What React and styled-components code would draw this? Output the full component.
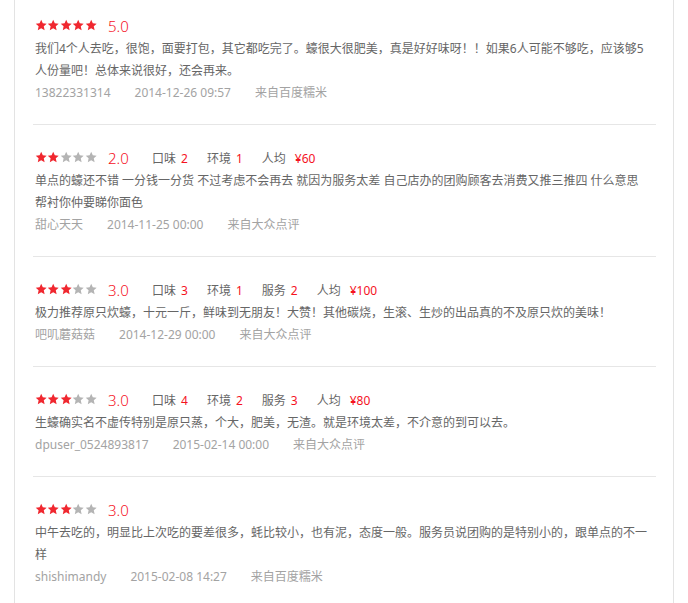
import styled, { createGlobalStyle } from "styled-components";

const GlobalStyle = createGlobalStyle`
  body {
    margin: 0;
    background: #fff;
    font-family: "Noto Sans", "Noto Sans CJK SC", sans-serif;
  }
`;

const reviews = [
  {
    stars: 5,
    rating: "5.0",
    scores: [],
    text: "我们4个人去吃，很饱，面要打包，其它都吃完了。蠔很大很肥美，真是好好味呀！！如果6人可能不够吃，应该够5人份量吧！总体来说很好，还会再来。",
    user: "13822331314",
    time: "2014-12-26 09:57",
    source: "来自百度糯米",
  },
  {
    stars: 2,
    rating: "2.0",
    scores: [
      ["口味", "2"],
      ["环境", "1"],
    ],
    price: "¥60",
    text: "单点的蠔还不错 一分钱一分货 不过考虑不会再去 就因为服务太差 自己店办的团购顾客去消费又推三推四 什么意思 帮衬你仲要睇你面色",
    user: "甜心天天",
    time: "2014-11-25 00:00",
    source: "来自大众点评",
  },
  {
    stars: 3,
    rating: "3.0",
    scores: [
      ["口味", "3"],
      ["环境", "1"],
      ["服务", "2"],
    ],
    price: "¥100",
    text: "极力推荐原只炊蠔，十元一斤，鲜味到无朋友！大赞！其他碳烧，生滚、生炒的出品真的不及原只炊的美味！",
    user: "吧叽蘑菇菇",
    time: "2014-12-29 00:00",
    source: "来自大众点评",
  },
  {
    stars: 3,
    rating: "3.0",
    scores: [
      ["口味", "4"],
      ["环境", "2"],
      ["服务", "3"],
    ],
    price: "¥80",
    text: "生蠔确实名不虚传特别是原只蒸，个大，肥美，无渣。就是环境太差，不介意的到可以去。",
    user: "dpuser_0524893817",
    time: "2015-02-14 00:00",
    source: "来自大众点评",
  },
  {
    stars: 3,
    rating: "3.0",
    scores: [],
    text: "中午去吃的，明显比上次吃的要差很多，蚝比较小，也有泥，态度一般。服务员说团购的是特别小的，跟单点的不一样",
    user: "shishimandy",
    time: "2015-02-08 14:27",
    source: "来自百度糯米",
  },
];

const Star = ({ on }) => (
  <StarIcon viewBox="0 0 24 24" $on={on}>
    <polygon points="12,1.5 15.1,8.4 22.6,9.2 17,14.2 18.6,21.6 12,17.8 5.4,21.6 7,14.2 1.4,9.2 8.9,8.4" />
  </StarIcon>
);

const App = () => {
  return (
    <>
      <GlobalStyle />
      <Panel>
        {reviews.map((r, i) => (
          <Review key={i}>
            <Header>
              <Stars>
                {[0, 1, 2, 3, 4].map((n) => (
                  <Star key={n} on={n < r.stars} />
                ))}
              </Stars>
              <Rating>{r.rating}</Rating>
              {r.scores.map(([label, value]) => (
                <Score key={label}>
                  {label}
                  <Value>{value}</Value>
                </Score>
              ))}
              {r.price && (
                <Score>
                  人均
                  <Value $wide>{r.price}</Value>
                </Score>
              )}
            </Header>
            <Text>{r.text}</Text>
            <Meta>
              <span>{r.user}</span>
              <span>{r.time}</span>
              <span>{r.source}</span>
            </Meta>
          </Review>
        ))}
      </Panel>
    </>
  );
};

const Panel = styled.div`
  margin-left: 14px;
  width: 660px;
  min-height: 603px;
  box-sizing: border-box;
  border-left: 1px solid #e3e3e3;
  border-right: 1px solid #e3e3e3;
  padding: 0 17px 0 18px;
`;

const Review = styled.div`
  padding: 20px 0 20px 2px;
  border-bottom: 1px solid #e6e6e6;
  &:first-child {
    padding-top: 13px;
  }
`;

const Header = styled.div`
  display: flex;
  align-items: center;
  height: 25px;
`;

const Stars = styled.div`
  display: flex;
  width: 62px;
`;

const StarIcon = styled.svg`
  width: 12.4px;
  height: 12.4px;
  fill: ${(p) => (p.$on ? "#f0272f" : "#b4b4b4")};
`;

const Rating = styled.span`
  width: 44px;
  margin-left: 11px;
  font-size: 15px;
  font-weight: 300;
  color: #f5121e;
`;

const Score = styled.span`
  margin-right: 19px;
  font-size: 12px;
  color: #666;
`;

const Value = styled.span`
  margin-left: ${(p) => (p.$wide ? "9px" : "5px")};
  color: #f5121e;
`;

const Text = styled.p`
  margin: 0;
  padding-right: 5px;
  font-size: 12px;
  line-height: 22px;
  color: #666;
`;

const Meta = styled.div`
  display: flex;
  gap: 24px;
  font-size: 12px;
  line-height: 22px;
  color: #a3a3a3;
`;

export default App;
